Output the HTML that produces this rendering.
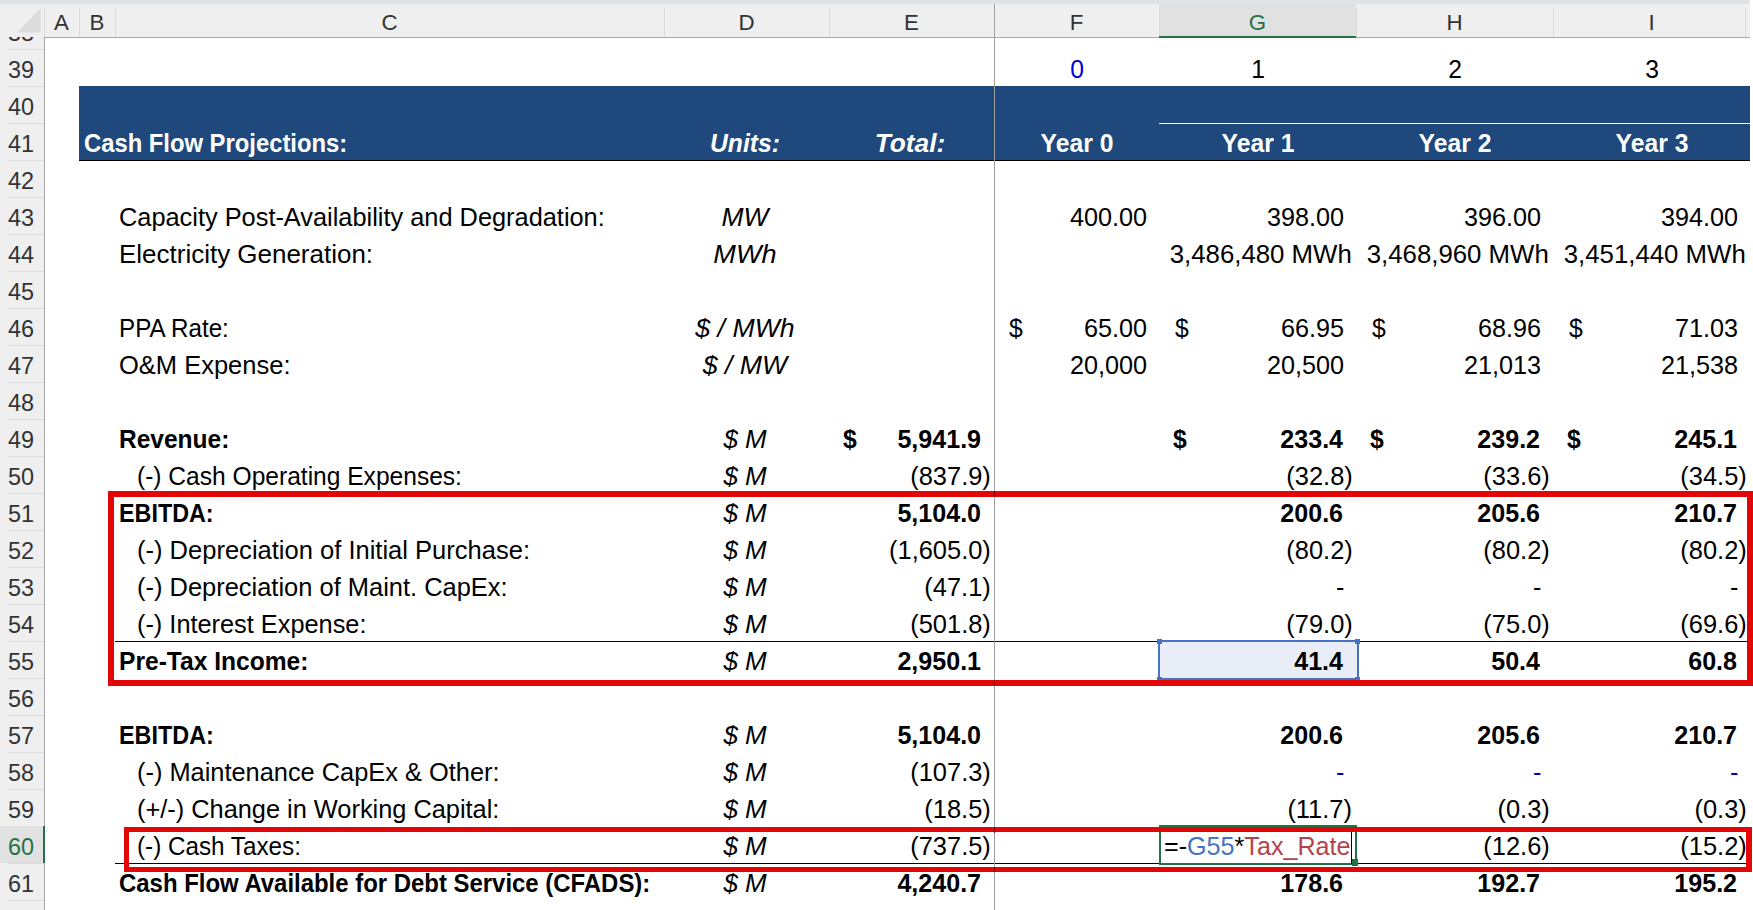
<!DOCTYPE html>
<html><head><meta charset="utf-8"><style>
html,body{margin:0;padding:0;}
body{width:1753px;height:910px;overflow:hidden;position:relative;background:#fff;font-family:"Liberation Sans",sans-serif;}
body>div,body>svg{position:absolute;}
.t{white-space:pre;}
</style></head><body>
<div style="left:0px;top:0px;width:1753px;height:910px;background:#ffffff;"></div>
<div style="left:0px;top:37px;width:44px;height:873px;background:#efefef;"></div>
<div style="left:8px;top:49px;width:36px;height:1px;background:#dedede;"></div>
<div style="left:8px;top:86px;width:36px;height:1px;background:#dedede;"></div>
<div style="left:8px;top:123px;width:36px;height:1px;background:#dedede;"></div>
<div style="left:8px;top:160px;width:36px;height:1px;background:#dedede;"></div>
<div style="left:8px;top:197px;width:36px;height:1px;background:#dedede;"></div>
<div style="left:8px;top:234px;width:36px;height:1px;background:#dedede;"></div>
<div style="left:8px;top:271px;width:36px;height:1px;background:#dedede;"></div>
<div style="left:8px;top:308px;width:36px;height:1px;background:#dedede;"></div>
<div style="left:8px;top:345px;width:36px;height:1px;background:#dedede;"></div>
<div style="left:8px;top:382px;width:36px;height:1px;background:#dedede;"></div>
<div style="left:8px;top:419px;width:36px;height:1px;background:#dedede;"></div>
<div style="left:8px;top:456px;width:36px;height:1px;background:#dedede;"></div>
<div style="left:8px;top:493px;width:36px;height:1px;background:#dedede;"></div>
<div style="left:8px;top:530px;width:36px;height:1px;background:#dedede;"></div>
<div style="left:8px;top:567px;width:36px;height:1px;background:#dedede;"></div>
<div style="left:8px;top:604px;width:36px;height:1px;background:#dedede;"></div>
<div style="left:8px;top:641px;width:36px;height:1px;background:#dedede;"></div>
<div style="left:8px;top:678px;width:36px;height:1px;background:#dedede;"></div>
<div style="left:8px;top:715px;width:36px;height:1px;background:#dedede;"></div>
<div style="left:8px;top:752px;width:36px;height:1px;background:#dedede;"></div>
<div style="left:8px;top:789px;width:36px;height:1px;background:#dedede;"></div>
<div style="left:8px;top:826px;width:36px;height:1px;background:#dedede;"></div>
<div style="left:8px;top:863px;width:36px;height:1px;background:#dedede;"></div>
<div style="left:8px;top:900px;width:36px;height:1px;background:#dedede;"></div>
<div style="left:0px;top:826px;width:44px;height:37px;background:#e1e1e1;"></div>
<div class="t" style="left:21px;top:21.93px;font-size:23px;line-height:23px;color:#333;transform:translateX(-50%) scaleX(1.02);transform-origin:center;">38</div>
<div class="t" style="left:21px;top:58.93px;font-size:23px;line-height:23px;color:#333;transform:translateX(-50%) scaleX(1.02);transform-origin:center;">39</div>
<div class="t" style="left:21px;top:95.93px;font-size:23px;line-height:23px;color:#333;transform:translateX(-50%) scaleX(1.02);transform-origin:center;">40</div>
<div class="t" style="left:21px;top:132.93px;font-size:23px;line-height:23px;color:#333;transform:translateX(-50%) scaleX(1.02);transform-origin:center;">41</div>
<div class="t" style="left:21px;top:169.93px;font-size:23px;line-height:23px;color:#333;transform:translateX(-50%) scaleX(1.02);transform-origin:center;">42</div>
<div class="t" style="left:21px;top:206.93px;font-size:23px;line-height:23px;color:#333;transform:translateX(-50%) scaleX(1.02);transform-origin:center;">43</div>
<div class="t" style="left:21px;top:243.93px;font-size:23px;line-height:23px;color:#333;transform:translateX(-50%) scaleX(1.02);transform-origin:center;">44</div>
<div class="t" style="left:21px;top:280.93px;font-size:23px;line-height:23px;color:#333;transform:translateX(-50%) scaleX(1.02);transform-origin:center;">45</div>
<div class="t" style="left:21px;top:317.93px;font-size:23px;line-height:23px;color:#333;transform:translateX(-50%) scaleX(1.02);transform-origin:center;">46</div>
<div class="t" style="left:21px;top:354.93px;font-size:23px;line-height:23px;color:#333;transform:translateX(-50%) scaleX(1.02);transform-origin:center;">47</div>
<div class="t" style="left:21px;top:391.93px;font-size:23px;line-height:23px;color:#333;transform:translateX(-50%) scaleX(1.02);transform-origin:center;">48</div>
<div class="t" style="left:21px;top:428.93px;font-size:23px;line-height:23px;color:#333;transform:translateX(-50%) scaleX(1.02);transform-origin:center;">49</div>
<div class="t" style="left:21px;top:465.93px;font-size:23px;line-height:23px;color:#333;transform:translateX(-50%) scaleX(1.02);transform-origin:center;">50</div>
<div class="t" style="left:21px;top:502.93px;font-size:23px;line-height:23px;color:#333;transform:translateX(-50%) scaleX(1.02);transform-origin:center;">51</div>
<div class="t" style="left:21px;top:539.93px;font-size:23px;line-height:23px;color:#333;transform:translateX(-50%) scaleX(1.02);transform-origin:center;">52</div>
<div class="t" style="left:21px;top:576.93px;font-size:23px;line-height:23px;color:#333;transform:translateX(-50%) scaleX(1.02);transform-origin:center;">53</div>
<div class="t" style="left:21px;top:613.93px;font-size:23px;line-height:23px;color:#333;transform:translateX(-50%) scaleX(1.02);transform-origin:center;">54</div>
<div class="t" style="left:21px;top:650.93px;font-size:23px;line-height:23px;color:#333;transform:translateX(-50%) scaleX(1.02);transform-origin:center;">55</div>
<div class="t" style="left:21px;top:687.93px;font-size:23px;line-height:23px;color:#333;transform:translateX(-50%) scaleX(1.02);transform-origin:center;">56</div>
<div class="t" style="left:21px;top:724.93px;font-size:23px;line-height:23px;color:#333;transform:translateX(-50%) scaleX(1.02);transform-origin:center;">57</div>
<div class="t" style="left:21px;top:761.93px;font-size:23px;line-height:23px;color:#333;transform:translateX(-50%) scaleX(1.02);transform-origin:center;">58</div>
<div class="t" style="left:21px;top:798.93px;font-size:23px;line-height:23px;color:#333;transform:translateX(-50%) scaleX(1.02);transform-origin:center;">59</div>
<div class="t" style="left:21px;top:835.93px;font-size:23px;line-height:23px;color:#217346;transform:translateX(-50%) scaleX(1.02);transform-origin:center;">60</div>
<div class="t" style="left:21px;top:872.93px;font-size:23px;line-height:23px;color:#333;transform:translateX(-50%) scaleX(1.02);transform-origin:center;">61</div>
<div style="left:0px;top:0px;width:1750px;height:4px;background:#dfe3e6;"></div>
<div style="left:0px;top:4px;width:1750px;height:33px;background:#efefef;"></div>
<svg style="position:absolute;left:0;top:0" width="44" height="37"><polygon points="40.5,8 40.5,32.5 17,32.5" fill="#dcdcdc"/></svg>
<div style="left:1159px;top:4px;width:197px;height:33px;background:#e1e1e1;"></div>
<div style="left:44px;top:8px;width:1px;height:29px;background:#dcdcdc;"></div>
<div style="left:79px;top:8px;width:1px;height:29px;background:#dcdcdc;"></div>
<div style="left:115px;top:8px;width:1px;height:29px;background:#dcdcdc;"></div>
<div style="left:664px;top:8px;width:1px;height:29px;background:#dcdcdc;"></div>
<div style="left:829px;top:8px;width:1px;height:29px;background:#dcdcdc;"></div>
<div style="left:994px;top:8px;width:1px;height:29px;background:#dcdcdc;"></div>
<div style="left:1159px;top:8px;width:1px;height:29px;background:#dcdcdc;"></div>
<div style="left:1356px;top:8px;width:1px;height:29px;background:#dcdcdc;"></div>
<div style="left:1553px;top:8px;width:1px;height:29px;background:#dcdcdc;"></div>
<div style="left:1745px;top:8px;width:1px;height:29px;background:#dcdcdc;"></div>
<div style="left:44px;top:37px;width:1706px;height:1px;background:#a8a8a8;"></div>
<div style="left:1159px;top:36px;width:197px;height:2px;background:#217346;"></div>
<div style="left:44px;top:37px;width:1px;height:873px;background:#a8a8a8;"></div>
<div style="left:43px;top:826px;width:2px;height:37px;background:#217346;"></div>
<div class="t" style="left:61.5px;top:12.12px;font-size:22.3px;line-height:22.3px;color:#333;transform:translateX(-50%) scaleX(1.0);transform-origin:center;">A</div>
<div class="t" style="left:97.0px;top:12.12px;font-size:22.3px;line-height:22.3px;color:#333;transform:translateX(-50%) scaleX(1.0);transform-origin:center;">B</div>
<div class="t" style="left:389.5px;top:12.12px;font-size:22.3px;line-height:22.3px;color:#333;transform:translateX(-50%) scaleX(1.0);transform-origin:center;">C</div>
<div class="t" style="left:746.5px;top:12.12px;font-size:22.3px;line-height:22.3px;color:#333;transform:translateX(-50%) scaleX(1.0);transform-origin:center;">D</div>
<div class="t" style="left:911.5px;top:12.12px;font-size:22.3px;line-height:22.3px;color:#333;transform:translateX(-50%) scaleX(1.0);transform-origin:center;">E</div>
<div class="t" style="left:1076.5px;top:12.12px;font-size:22.3px;line-height:22.3px;color:#333;transform:translateX(-50%) scaleX(1.0);transform-origin:center;">F</div>
<div class="t" style="left:1257.5px;top:12.12px;font-size:22.3px;line-height:22.3px;color:#217346;transform:translateX(-50%) scaleX(1.0);transform-origin:center;">G</div>
<div class="t" style="left:1454.5px;top:12.12px;font-size:22.3px;line-height:22.3px;color:#333;transform:translateX(-50%) scaleX(1.0);transform-origin:center;">H</div>
<div class="t" style="left:1651.5px;top:12.12px;font-size:22.3px;line-height:22.3px;color:#333;transform:translateX(-50%) scaleX(1.0);transform-origin:center;">I</div>
<div style="left:79px;top:86px;width:1671px;height:74px;background:#1f497d;"></div>
<div style="left:79px;top:160px;width:1671px;height:1px;background:#000;"></div>
<div style="left:1159px;top:123px;width:591px;height:1px;background:#ffffff;"></div>
<div class="t" style="left:1076.5px;top:57.37px;font-size:25.2px;line-height:25.2px;color:#0000d0;transform:translateX(-50%) scaleX(0.9801587301587301);transform-origin:center;">0</div>
<div class="t" style="left:1257.5px;top:57.37px;font-size:25.2px;line-height:25.2px;color:#000;transform:translateX(-50%) scaleX(0.9801587301587301);transform-origin:center;">1</div>
<div class="t" style="left:1454.5px;top:57.37px;font-size:25.2px;line-height:25.2px;color:#000;transform:translateX(-50%) scaleX(0.9801587301587301);transform-origin:center;">2</div>
<div class="t" style="left:1651.5px;top:57.37px;font-size:25.2px;line-height:25.2px;color:#000;transform:translateX(-50%) scaleX(0.9801587301587301);transform-origin:center;">3</div>
<div class="t" style="left:84px;top:131.37px;font-size:25.2px;line-height:25.2px;color:#fff;font-weight:bold;transform:scaleX(0.9448730158730158);transform-origin:left;">Cash Flow Projections:</div>
<div class="t" style="left:745px;top:131.37px;font-size:25.2px;line-height:25.2px;color:#fff;font-weight:bold;font-style:italic;transform:translateX(-50%) scaleX(0.9801587301587301);transform-origin:center;">Units:</div>
<div class="t" style="left:909.5px;top:131.37px;font-size:25.2px;line-height:25.2px;color:#fff;font-weight:bold;font-style:italic;transform:translateX(-50%) scaleX(1.0438690476190475);transform-origin:center;">Total:</div>
<div class="t" style="left:1076.5px;top:131.37px;font-size:25.2px;line-height:25.2px;color:#fff;font-weight:bold;transform:translateX(-50%) scaleX(0.9801587301587301);transform-origin:center;">Year 0</div>
<div class="t" style="left:1257.5px;top:131.37px;font-size:25.2px;line-height:25.2px;color:#fff;font-weight:bold;transform:translateX(-50%) scaleX(0.9801587301587301);transform-origin:center;">Year 1</div>
<div class="t" style="left:1454.5px;top:131.37px;font-size:25.2px;line-height:25.2px;color:#fff;font-weight:bold;transform:translateX(-50%) scaleX(0.9801587301587301);transform-origin:center;">Year 2</div>
<div class="t" style="left:1651.5px;top:131.37px;font-size:25.2px;line-height:25.2px;color:#fff;font-weight:bold;transform:translateX(-50%) scaleX(0.9801587301587301);transform-origin:center;">Year 3</div>
<div class="t" style="left:119.0px;top:205.37px;font-size:25.2px;line-height:25.2px;color:#000;transform:scaleX(1.0066230158730158);transform-origin:left;">Capacity Post-Availability and Degradation:</div>
<div class="t" style="left:745.0px;top:205.37px;font-size:25.2px;line-height:25.2px;color:#000;font-style:italic;transform:translateX(-50%) scaleX(1.0487698412698414);transform-origin:center;">MW</div>
<div class="t" style="right:605.5px;top:205.37px;font-size:25.2px;line-height:25.2px;color:#000;transform:scaleX(0.9997619047619047);transform-origin:right;">400.00</div>
<div class="t" style="right:408.5px;top:205.37px;font-size:25.2px;line-height:25.2px;color:#000;transform:scaleX(0.9997619047619047);transform-origin:right;">398.00</div>
<div class="t" style="right:211.5px;top:205.37px;font-size:25.2px;line-height:25.2px;color:#000;transform:scaleX(0.9997619047619047);transform-origin:right;">396.00</div>
<div class="t" style="right:14.5px;top:205.37px;font-size:25.2px;line-height:25.2px;color:#000;transform:scaleX(0.9997619047619047);transform-origin:right;">394.00</div>
<div class="t" style="left:119.0px;top:242.37px;font-size:25.2px;line-height:25.2px;color:#000;transform:scaleX(1.0311269841269841);transform-origin:left;">Electricity Generation:</div>
<div class="t" style="left:745.0px;top:242.37px;font-size:25.2px;line-height:25.2px;color:#000;font-style:italic;transform:translateX(-50%) scaleX(1.0781746031746033);transform-origin:center;">MWh</div>
<div class="t" style="right:401px;top:242.37px;font-size:25.2px;line-height:25.2px;color:#000;transform:scaleX(1.024265873015873);transform-origin:right;">3,486,480 MWh</div>
<div class="t" style="right:204px;top:242.37px;font-size:25.2px;line-height:25.2px;color:#000;transform:scaleX(1.024265873015873);transform-origin:right;">3,468,960 MWh</div>
<div class="t" style="right:7px;top:242.37px;font-size:25.2px;line-height:25.2px;color:#000;transform:scaleX(1.024265873015873);transform-origin:right;">3,451,440 MWh</div>
<div class="t" style="left:119.0px;top:316.37px;font-size:25.2px;line-height:25.2px;color:#000;transform:scaleX(0.9605555555555556);transform-origin:left;">PPA Rate:</div>
<div class="t" style="left:745.0px;top:316.37px;font-size:25.2px;line-height:25.2px;color:#000;font-style:italic;transform:translateX(-50%) scaleX(1.0585714285714287);transform-origin:center;">$ / MWh</div>
<div class="t" style="right:605.5px;top:316.37px;font-size:25.2px;line-height:25.2px;color:#000;transform:scaleX(0.9997619047619047);transform-origin:right;">65.00</div>
<div class="t" style="left:1009px;top:316.37px;font-size:25.2px;line-height:25.2px;color:#000;transform:scaleX(0.9801587301587301);transform-origin:left;">$</div>
<div class="t" style="right:408.5px;top:316.37px;font-size:25.2px;line-height:25.2px;color:#000;transform:scaleX(0.9997619047619047);transform-origin:right;">66.95</div>
<div class="t" style="left:1175.2px;top:316.37px;font-size:25.2px;line-height:25.2px;color:#000;transform:scaleX(0.9801587301587301);transform-origin:left;">$</div>
<div class="t" style="right:211.5px;top:316.37px;font-size:25.2px;line-height:25.2px;color:#000;transform:scaleX(0.9997619047619047);transform-origin:right;">68.96</div>
<div class="t" style="left:1372.2px;top:316.37px;font-size:25.2px;line-height:25.2px;color:#000;transform:scaleX(0.9801587301587301);transform-origin:left;">$</div>
<div class="t" style="right:14.5px;top:316.37px;font-size:25.2px;line-height:25.2px;color:#000;transform:scaleX(0.9997619047619047);transform-origin:right;">71.03</div>
<div class="t" style="left:1569.2px;top:316.37px;font-size:25.2px;line-height:25.2px;color:#000;transform:scaleX(0.9801587301587301);transform-origin:left;">$</div>
<div class="t" style="left:119.0px;top:353.37px;font-size:25.2px;line-height:25.2px;color:#000;transform:scaleX(1.012503968253968);transform-origin:left;">O&amp;M Expense:</div>
<div class="t" style="left:745.0px;top:353.37px;font-size:25.2px;line-height:25.2px;color:#000;font-style:italic;transform:translateX(-50%) scaleX(1.0585714285714287);transform-origin:center;">$ / MW</div>
<div class="t" style="right:605.5px;top:353.37px;font-size:25.2px;line-height:25.2px;color:#000;transform:scaleX(0.9997619047619047);transform-origin:right;">20,000</div>
<div class="t" style="right:408.5px;top:353.37px;font-size:25.2px;line-height:25.2px;color:#000;transform:scaleX(0.9997619047619047);transform-origin:right;">20,500</div>
<div class="t" style="right:211.5px;top:353.37px;font-size:25.2px;line-height:25.2px;color:#000;transform:scaleX(0.9997619047619047);transform-origin:right;">21,013</div>
<div class="t" style="right:14.5px;top:353.37px;font-size:25.2px;line-height:25.2px;color:#000;transform:scaleX(0.9997619047619047);transform-origin:right;">21,538</div>
<div class="t" style="left:119.3px;top:427.37px;font-size:25.2px;line-height:25.2px;color:#000;font-weight:bold;transform:scaleX(0.9732976190476191);transform-origin:left;">Revenue:</div>
<div class="t" style="left:745.0px;top:427.37px;font-size:25.2px;line-height:25.2px;color:#000;font-style:italic;transform:translateX(-50%) scaleX(1.0291666666666666);transform-origin:center;">$ M</div>
<div class="t" style="right:772px;top:427.37px;font-size:25.2px;line-height:25.2px;color:#000;font-weight:bold;transform:scaleX(0.994861111111111);transform-origin:right;">5,941.9</div>
<div class="t" style="left:842.5px;top:427.37px;font-size:25.2px;line-height:25.2px;color:#000;font-weight:bold;transform:scaleX(0.9801587301587301);transform-origin:left;">$</div>
<div class="t" style="right:410px;top:427.37px;font-size:25.2px;line-height:25.2px;color:#000;font-weight:bold;transform:scaleX(0.994861111111111);transform-origin:right;">233.4</div>
<div class="t" style="left:1172.5px;top:427.37px;font-size:25.2px;line-height:25.2px;color:#000;font-weight:bold;transform:scaleX(0.9801587301587301);transform-origin:left;">$</div>
<div class="t" style="right:213px;top:427.37px;font-size:25.2px;line-height:25.2px;color:#000;font-weight:bold;transform:scaleX(0.994861111111111);transform-origin:right;">239.2</div>
<div class="t" style="left:1369.5px;top:427.37px;font-size:25.2px;line-height:25.2px;color:#000;font-weight:bold;transform:scaleX(0.9801587301587301);transform-origin:left;">$</div>
<div class="t" style="right:16px;top:427.37px;font-size:25.2px;line-height:25.2px;color:#000;font-weight:bold;transform:scaleX(0.994861111111111);transform-origin:right;">245.1</div>
<div class="t" style="left:1566.5px;top:427.37px;font-size:25.2px;line-height:25.2px;color:#000;font-weight:bold;transform:scaleX(0.9801587301587301);transform-origin:left;">$</div>
<div class="t" style="left:137.2px;top:464.37px;font-size:25.2px;line-height:25.2px;color:#000;transform:scaleX(0.9752579365079365);transform-origin:left;">(-) Cash Operating Expenses:</div>
<div class="t" style="left:745.0px;top:464.37px;font-size:25.2px;line-height:25.2px;color:#000;font-style:italic;transform:translateX(-50%) scaleX(1.0291666666666666);transform-origin:center;">$ M</div>
<div class="t" style="right:762.7px;top:464.37px;font-size:25.2px;line-height:25.2px;color:#000;transform:scaleX(1.009563492063492);transform-origin:right;">(837.9)</div>
<div class="t" style="right:400.70000000000005px;top:464.37px;font-size:25.2px;line-height:25.2px;color:#000;transform:scaleX(1.009563492063492);transform-origin:right;">(32.8)</div>
<div class="t" style="right:203.70000000000005px;top:464.37px;font-size:25.2px;line-height:25.2px;color:#000;transform:scaleX(1.009563492063492);transform-origin:right;">(33.6)</div>
<div class="t" style="right:6.7000000000000455px;top:464.37px;font-size:25.2px;line-height:25.2px;color:#000;transform:scaleX(1.009563492063492);transform-origin:right;">(34.5)</div>
<div class="t" style="left:119.3px;top:501.37px;font-size:25.2px;line-height:25.2px;color:#000;font-weight:bold;transform:scaleX(0.9262499999999999);transform-origin:left;">EBITDA:</div>
<div class="t" style="left:745.0px;top:501.37px;font-size:25.2px;line-height:25.2px;color:#000;font-style:italic;transform:translateX(-50%) scaleX(1.0291666666666666);transform-origin:center;">$ M</div>
<div class="t" style="right:772px;top:501.37px;font-size:25.2px;line-height:25.2px;color:#000;font-weight:bold;transform:scaleX(0.994861111111111);transform-origin:right;">5,104.0</div>
<div class="t" style="right:410px;top:501.37px;font-size:25.2px;line-height:25.2px;color:#000;font-weight:bold;transform:scaleX(0.994861111111111);transform-origin:right;">200.6</div>
<div class="t" style="right:213px;top:501.37px;font-size:25.2px;line-height:25.2px;color:#000;font-weight:bold;transform:scaleX(0.994861111111111);transform-origin:right;">205.6</div>
<div class="t" style="right:16px;top:501.37px;font-size:25.2px;line-height:25.2px;color:#000;font-weight:bold;transform:scaleX(0.994861111111111);transform-origin:right;">210.7</div>
<div class="t" style="left:137.2px;top:538.37px;font-size:25.2px;line-height:25.2px;color:#000;transform:scaleX(1.013484126984127);transform-origin:left;">(-) Depreciation of Initial Purchase:</div>
<div class="t" style="left:745.0px;top:538.37px;font-size:25.2px;line-height:25.2px;color:#000;font-style:italic;transform:translateX(-50%) scaleX(1.0291666666666666);transform-origin:center;">$ M</div>
<div class="t" style="right:762.7px;top:538.37px;font-size:25.2px;line-height:25.2px;color:#000;transform:scaleX(1.009563492063492);transform-origin:right;">(1,605.0)</div>
<div class="t" style="right:400.70000000000005px;top:538.37px;font-size:25.2px;line-height:25.2px;color:#000;transform:scaleX(1.009563492063492);transform-origin:right;">(80.2)</div>
<div class="t" style="right:203.70000000000005px;top:538.37px;font-size:25.2px;line-height:25.2px;color:#000;transform:scaleX(1.009563492063492);transform-origin:right;">(80.2)</div>
<div class="t" style="right:6.7000000000000455px;top:538.37px;font-size:25.2px;line-height:25.2px;color:#000;transform:scaleX(1.009563492063492);transform-origin:right;">(80.2)</div>
<div class="t" style="left:137.2px;top:575.37px;font-size:25.2px;line-height:25.2px;color:#000;transform:scaleX(1.0105436507936507);transform-origin:left;">(-) Depreciation of Maint. CapEx:</div>
<div class="t" style="left:745.0px;top:575.37px;font-size:25.2px;line-height:25.2px;color:#000;font-style:italic;transform:translateX(-50%) scaleX(1.0291666666666666);transform-origin:center;">$ M</div>
<div class="t" style="right:762.7px;top:575.37px;font-size:25.2px;line-height:25.2px;color:#000;transform:scaleX(1.009563492063492);transform-origin:right;">(47.1)</div>
<div class="t" style="right:408.5px;top:575.37px;font-size:25.2px;line-height:25.2px;color:#000;transform:scaleX(0.9997619047619047);transform-origin:right;">-</div>
<div class="t" style="right:211.5px;top:575.37px;font-size:25.2px;line-height:25.2px;color:#000;transform:scaleX(0.9997619047619047);transform-origin:right;">-</div>
<div class="t" style="right:14.5px;top:575.37px;font-size:25.2px;line-height:25.2px;color:#000;transform:scaleX(0.9997619047619047);transform-origin:right;">-</div>
<div class="t" style="left:137.2px;top:612.37px;font-size:25.2px;line-height:25.2px;color:#000;transform:scaleX(1.005642857142857);transform-origin:left;">(-) Interest Expense:</div>
<div class="t" style="left:745.0px;top:612.37px;font-size:25.2px;line-height:25.2px;color:#000;font-style:italic;transform:translateX(-50%) scaleX(1.0291666666666666);transform-origin:center;">$ M</div>
<div class="t" style="right:762.7px;top:612.37px;font-size:25.2px;line-height:25.2px;color:#000;transform:scaleX(1.009563492063492);transform-origin:right;">(501.8)</div>
<div class="t" style="right:400.70000000000005px;top:612.37px;font-size:25.2px;line-height:25.2px;color:#000;transform:scaleX(1.009563492063492);transform-origin:right;">(79.0)</div>
<div class="t" style="right:203.70000000000005px;top:612.37px;font-size:25.2px;line-height:25.2px;color:#000;transform:scaleX(1.009563492063492);transform-origin:right;">(75.0)</div>
<div class="t" style="right:6.7000000000000455px;top:612.37px;font-size:25.2px;line-height:25.2px;color:#000;transform:scaleX(1.009563492063492);transform-origin:right;">(69.6)</div>
<div style="left:115px;top:641px;width:1635px;height:1px;background:#000;"></div>
<div style="left:1158px;top:640px;width:200.5px;height:40px;background:#e8edf7;box-sizing:border-box;border:2px solid #4472c4;"></div>
<div style="left:1156.5px;top:638.5px;width:5.0px;height:5.0px;background:#4472c4;"></div>
<div style="left:1355.0px;top:638.5px;width:5.0px;height:5.0px;background:#4472c4;"></div>
<div style="left:1156.5px;top:676.5px;width:5.0px;height:5.0px;background:#4472c4;"></div>
<div style="left:1355.0px;top:676.5px;width:5.0px;height:5.0px;background:#4472c4;"></div>
<div class="t" style="left:119.3px;top:649.37px;font-size:25.2px;line-height:25.2px;color:#000;font-weight:bold;transform:scaleX(0.9762380952380952);transform-origin:left;">Pre-Tax Income:</div>
<div class="t" style="left:745.0px;top:649.37px;font-size:25.2px;line-height:25.2px;color:#000;font-style:italic;transform:translateX(-50%) scaleX(1.0291666666666666);transform-origin:center;">$ M</div>
<div class="t" style="right:772px;top:649.37px;font-size:25.2px;line-height:25.2px;color:#000;font-weight:bold;transform:scaleX(0.994861111111111);transform-origin:right;">2,950.1</div>
<div class="t" style="right:410px;top:649.37px;font-size:25.2px;line-height:25.2px;color:#000;font-weight:bold;transform:scaleX(0.994861111111111);transform-origin:right;">41.4</div>
<div class="t" style="right:213px;top:649.37px;font-size:25.2px;line-height:25.2px;color:#000;font-weight:bold;transform:scaleX(0.994861111111111);transform-origin:right;">50.4</div>
<div class="t" style="right:16px;top:649.37px;font-size:25.2px;line-height:25.2px;color:#000;font-weight:bold;transform:scaleX(0.994861111111111);transform-origin:right;">60.8</div>
<div class="t" style="left:119.3px;top:723.37px;font-size:25.2px;line-height:25.2px;color:#000;font-weight:bold;transform:scaleX(0.9291904761904761);transform-origin:left;">EBITDA:</div>
<div class="t" style="left:745.0px;top:723.37px;font-size:25.2px;line-height:25.2px;color:#000;font-style:italic;transform:translateX(-50%) scaleX(1.0291666666666666);transform-origin:center;">$ M</div>
<div class="t" style="right:772px;top:723.37px;font-size:25.2px;line-height:25.2px;color:#000;font-weight:bold;transform:scaleX(0.994861111111111);transform-origin:right;">5,104.0</div>
<div class="t" style="right:410px;top:723.37px;font-size:25.2px;line-height:25.2px;color:#000;font-weight:bold;transform:scaleX(0.994861111111111);transform-origin:right;">200.6</div>
<div class="t" style="right:213px;top:723.37px;font-size:25.2px;line-height:25.2px;color:#000;font-weight:bold;transform:scaleX(0.994861111111111);transform-origin:right;">205.6</div>
<div class="t" style="right:16px;top:723.37px;font-size:25.2px;line-height:25.2px;color:#000;font-weight:bold;transform:scaleX(0.994861111111111);transform-origin:right;">210.7</div>
<div class="t" style="left:137.2px;top:760.37px;font-size:25.2px;line-height:25.2px;color:#000;transform:scaleX(1.0076031746031746);transform-origin:left;">(-) Maintenance CapEx &amp; Other:</div>
<div class="t" style="left:745.0px;top:760.37px;font-size:25.2px;line-height:25.2px;color:#000;font-style:italic;transform:translateX(-50%) scaleX(1.0291666666666666);transform-origin:center;">$ M</div>
<div class="t" style="right:762.7px;top:760.37px;font-size:25.2px;line-height:25.2px;color:#000;transform:scaleX(1.009563492063492);transform-origin:right;">(107.3)</div>
<div class="t" style="right:408.5px;top:760.37px;font-size:25.2px;line-height:25.2px;color:#0000c0;transform:scaleX(0.9997619047619047);transform-origin:right;">-</div>
<div class="t" style="right:211.5px;top:760.37px;font-size:25.2px;line-height:25.2px;color:#0000c0;transform:scaleX(0.9997619047619047);transform-origin:right;">-</div>
<div class="t" style="right:14.5px;top:760.37px;font-size:25.2px;line-height:25.2px;color:#0000c0;transform:scaleX(0.9997619047619047);transform-origin:right;">-</div>
<div class="t" style="left:137.2px;top:797.37px;font-size:25.2px;line-height:25.2px;color:#000;transform:scaleX(1.0066230158730158);transform-origin:left;">(+/-) Change in Working Capital:</div>
<div class="t" style="left:745.0px;top:797.37px;font-size:25.2px;line-height:25.2px;color:#000;font-style:italic;transform:translateX(-50%) scaleX(1.0291666666666666);transform-origin:center;">$ M</div>
<div class="t" style="right:762.7px;top:797.37px;font-size:25.2px;line-height:25.2px;color:#000;transform:scaleX(1.009563492063492);transform-origin:right;">(18.5)</div>
<div class="t" style="right:400.70000000000005px;top:797.37px;font-size:25.2px;line-height:25.2px;color:#000;transform:scaleX(1.009563492063492);transform-origin:right;">(11.7)</div>
<div class="t" style="right:203.70000000000005px;top:797.37px;font-size:25.2px;line-height:25.2px;color:#000;transform:scaleX(1.009563492063492);transform-origin:right;">(0.3)</div>
<div class="t" style="right:6.7000000000000455px;top:797.37px;font-size:25.2px;line-height:25.2px;color:#000;transform:scaleX(1.009563492063492);transform-origin:right;">(0.3)</div>
<div style="left:115px;top:863px;width:1635px;height:1px;background:#000;"></div>
<div class="t" style="left:137.2px;top:834.37px;font-size:25.2px;line-height:25.2px;color:#000;transform:scaleX(0.9625158730158729);transform-origin:left;">(-) Cash Taxes:</div>
<div class="t" style="left:745.0px;top:834.37px;font-size:25.2px;line-height:25.2px;color:#000;font-style:italic;transform:translateX(-50%) scaleX(1.0291666666666666);transform-origin:center;">$ M</div>
<div class="t" style="right:762.7px;top:834.37px;font-size:25.2px;line-height:25.2px;color:#000;transform:scaleX(1.009563492063492);transform-origin:right;">(737.5)</div>
<div class="t" style="right:203.70000000000005px;top:834.37px;font-size:25.2px;line-height:25.2px;color:#000;transform:scaleX(1.009563492063492);transform-origin:right;">(12.6)</div>
<div class="t" style="right:6.7000000000000455px;top:834.37px;font-size:25.2px;line-height:25.2px;color:#000;transform:scaleX(1.009563492063492);transform-origin:right;">(15.2)</div>
<div style="left:1159px;top:825px;width:198px;height:40px;background:#ffffff;box-sizing:border-box;border:2px solid #217346;"></div>
<div style="left:1352px;top:859px;width:6px;height:7px;background:#217346;"></div>
<div class="t" style="left:1163.5px;top:834.37px;font-size:25.2px;line-height:25.2px;color:#000;transform:scaleX(0.9978015873015873);transform-origin:left;">=-<span style="color:#4472c4">G55</span>*<span style="color:#b4424c">Tax_Rate</span></div>
<div style="left:1351px;top:832px;width:1px;height:32px;background:#000;"></div>
<div class="t" style="left:119.3px;top:871.37px;font-size:25.2px;line-height:25.2px;color:#000;font-weight:bold;transform:scaleX(0.9497738095238095);transform-origin:left;">Cash Flow Available for Debt Service (CFADS):</div>
<div class="t" style="left:745.0px;top:871.37px;font-size:25.2px;line-height:25.2px;color:#000;font-style:italic;transform:translateX(-50%) scaleX(1.0291666666666666);transform-origin:center;">$ M</div>
<div class="t" style="right:772px;top:871.37px;font-size:25.2px;line-height:25.2px;color:#000;font-weight:bold;transform:scaleX(0.994861111111111);transform-origin:right;">4,240.7</div>
<div class="t" style="right:410px;top:871.37px;font-size:25.2px;line-height:25.2px;color:#000;font-weight:bold;transform:scaleX(0.994861111111111);transform-origin:right;">178.6</div>
<div class="t" style="right:213px;top:871.37px;font-size:25.2px;line-height:25.2px;color:#000;font-weight:bold;transform:scaleX(0.994861111111111);transform-origin:right;">192.7</div>
<div class="t" style="right:16px;top:871.37px;font-size:25.2px;line-height:25.2px;color:#000;font-weight:bold;transform:scaleX(0.994861111111111);transform-origin:right;">195.2</div>
<div style="left:994px;top:4px;width:1px;height:906px;background:#a0a0a0;"></div>
<div style="left:108px;top:491px;width:1645px;height:195px;box-sizing:border-box;border:6px solid #e20606;border-right-width:6px;"></div>
<div style="left:124px;top:827px;width:1628px;height:45px;box-sizing:border-box;border:5.5px solid #e20606;border-right-width:6px;"></div>
<div style="left:994px;top:491px;width:1px;height:6px;background:#8a0000;"></div>
<div style="left:994px;top:680px;width:1px;height:6px;background:#8a0000;"></div>
<div style="left:994px;top:827px;width:1px;height:5.5px;background:#8a0000;"></div>
<div style="left:994px;top:866.5px;width:1px;height:5.5px;background:#8a0000;"></div>
</body></html>
